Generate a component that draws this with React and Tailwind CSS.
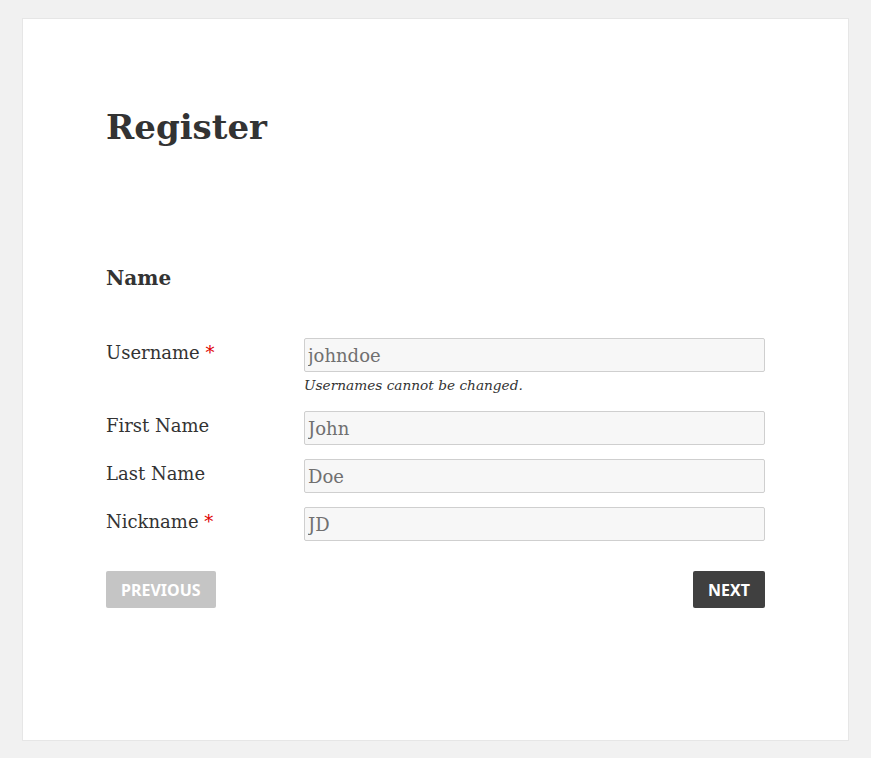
const serif = { fontFamily: '"DejaVu Serif", "Liberation Serif", serif' };

const fields = [
  { label: 'Username', value: 'johndoe', required: true, help: 'Usernames cannot be changed.' },
  { label: 'First Name', value: 'John' },
  { label: 'Last Name', value: 'Doe' },
  { label: 'Nickname', value: 'JD', required: true },
];

const Field = ({ field }) => (
  <div className="flex">
    <label className="w-[198px] shrink-0 text-[18px] leading-[30px] text-[#333]">
      {field.label}
      {field.required && <span className="text-[#e00000]"> *</span>}
    </label>
    <div className="flex-1">
      <input
        readOnly
        value={field.value}
        className="w-full h-[34px] px-[3px] bg-[#f7f7f7] border border-[#cfcfcf] rounded-[2px] text-[18px] text-[#707070] outline-none"
        style={{ fontFamily: '"DejaVu Serif", "Liberation Serif", serif' }}
      />
      {field.help && (
        <p className="mt-[3px] mb-[2px] text-[13.7px] leading-[20px] italic text-[#333]">{field.help}</p>
      )}
    </div>
  </div>
);

export default function App() {
  return (
    <div className="min-h-screen bg-[#f1f1f1] pt-[18px] pl-[22px]" style={serif}>
      <div className="w-[827px] h-[723px] bg-white border border-[#e6e6e6] px-[83px] pt-[84px]">
        <h1 className="text-[34px] leading-[48px] font-bold text-[#333]">Register</h1>

        <h2 className="mt-[112px] text-[20px] leading-[30px] font-bold text-[#333]">Name</h2>

        <div className="mt-[45px] flex flex-col gap-[14px]">
          {fields.map((f) => (
            <Field key={f.label} field={f} />
          ))}
        </div>

        <div
          className="mt-[30px] flex justify-between"
          style={{ fontFamily: '"Noto Sans", "Open Sans", sans-serif' }}
        >
          <button className="h-[37px] px-[15px] rounded-[2px] bg-[#c5c5c5] text-white text-[16px] font-bold uppercase">
            Previous
          </button>
          <button className="h-[37px] px-[15px] rounded-[2px] bg-[#404040] text-white text-[16px] font-bold uppercase">
            Next
          </button>
        </div>
      </div>
    </div>
  );
}
